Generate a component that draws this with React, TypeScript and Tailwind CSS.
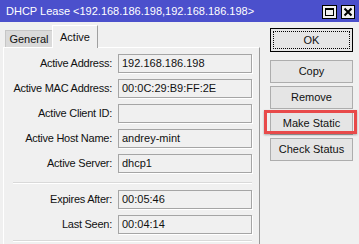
import React from "react";

const font = { fontFamily: '"Liberation Sans", Arial, sans-serif' };

function Field({ label, value, className = "" }: { label: string; value: string; className?: string }) {
  return (
    <div className={"flex items-center h-[19px] " + className}>
      <div className="w-[114px] text-right pr-[6px] text-[11px] text-[#111] whitespace-nowrap tracking-[-0.25px]">{label}</div>
      <div className="w-[134px] h-[19px] border border-[#a5a5a5] shadow-[1px_1px_0_#ffffff] bg-[#f0f0f0] flex items-center pl-[3px] text-[11px] text-[#111] whitespace-nowrap">
        {value}
      </div>
    </div>
  );
}

function Sep({ className = "" }: { className?: string }) {
  return <div className={"ml-[9px] w-[239px] h-[1px] bg-[#d9d9d9] shadow-[0_1px_0_#ffffff] " + className} />;
}

function Btn({ children }: { children: React.ReactNode }) {
  return (
    <div className="w-[83px] h-[23px] border border-[#adadad] bg-[#e5e5e5] flex items-center justify-center text-[11px] text-[#111]">
      {children}
    </div>
  );
}

export default function App() {
  return (
    <div className="w-[359px] h-[244px] bg-[#f0f0f0] overflow-hidden flex flex-col" style={font}>
      <div className="h-[22px] bg-[#4b50cc] flex items-center pl-[6px] text-white text-[11px] shrink-0">
        <span className="flex-1">DHCP Lease &lt;192.168.186.198,192.168.186.198&gt;</span>
        <div className="flex gap-[4px] mr-[4px] mt-[1px]">
          <div className="w-[15px] h-[14px] bg-[#f0f0f0] border border-black flex items-center justify-center">
            <div className="w-[9px] h-[8px] border border-black border-t-2" />
          </div>
          <div className="w-[14px] h-[14px] bg-[#f0f0f0] border border-black flex items-center justify-center">
            <svg width="10" height="10" viewBox="0 0 10 10">
              <path d="M1.5 1.5 L8.5 8.5 M8.5 1.5 L1.5 8.5" stroke="black" strokeWidth="2" />
            </svg>
          </div>
        </div>
      </div>
      <div className="flex flex-1">
        <div className="w-[260px] flex flex-col">
          <div className="h-[25px] flex items-end pl-[5px] relative z-10">
            <div className="w-[48px] h-[17px] bg-[#dadada] border border-b-0 border-[#c6c6c6] flex items-center justify-center text-[11px] text-[#111]">
              General
            </div>
            <div className="w-[46px] h-[23px] -mb-[1px] bg-[#f0f0f0] border border-b-0 border-l-white border-t-white border-r-[#a0a0a0] flex items-start justify-center pt-[3px] text-[11px] text-[#111] -ml-[1px]">
              Active
            </div>
          </div>
          <div className="ml-[3px] w-[257px] flex-1 border-t border-l border-r border-t-[#ffffff] border-l-white border-r-[#9a9a9a] pt-[6px] flex flex-col">
            <Field label="Active Address:" value="192.168.186.198" />
            <Field label="Active MAC Address:" value="00:0C:29:B9:FF:2E" className="mt-[6px]" />
            <Field label="Active Client ID:" value="" className="mt-[6px]" />
            <Field label="Active Host Name:" value="andrey-mint" className="mt-[6px]" />
            <Field label="Active Server:" value="dhcp1" className="mt-[6px]" />
            <Sep className="mt-[9px]" />
            <Field label="Expires After:" value="00:05:46" className="mt-[7px]" />
            <Field label="Last Seen:" value="00:04:14" className="mt-[6px]" />
            <Sep className="mt-[6px]" />
          </div>
        </div>
        <div className="flex flex-col pl-[10px] pt-[6px]">
          <div className="w-[83px] h-[24px] border border-black bg-[#e5e5e5] p-[2px]">
            <div className="w-full h-full border border-dotted border-black flex items-center justify-center text-[11px] text-[#111]">
              OK
            </div>
          </div>
          <div className="flex flex-col gap-[3px] mt-[8px]">
            <Btn>Copy</Btn>
            <Btn>Remove</Btn>
            <div className="relative">
              <Btn>Make Static</Btn>
              <div className="absolute -left-[6px] -top-[2px] w-[93px] h-[24px] border-[3px] border-[#e84a4a] shadow-[0_1px_2px_rgba(0,0,0,0.3)]" />
            </div>
            <Btn>Check Status</Btn>
          </div>
        </div>
      </div>
    </div>
  );
}
